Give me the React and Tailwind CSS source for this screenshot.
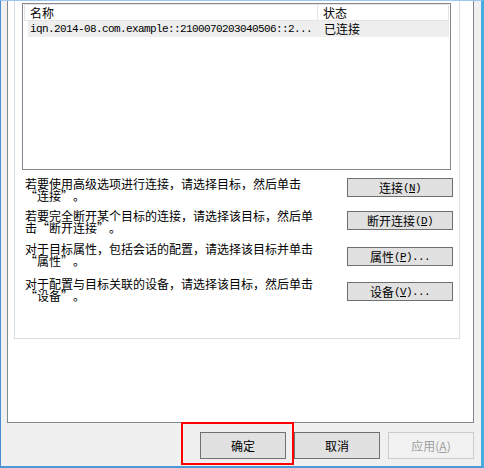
import React from 'react';

const cjk = "font-['Noto_Sans_CJK_SC',sans-serif]";
const mono = "font-['Liberation_Mono','Noto_Sans_CJK_SC',monospace] text-[11px] tracking-[-0.6px]";

const rows = [
  { text: '若要使用高级选项进行连接，请选择目标，然后单击', quoted: '连接', label: '连接', key: 'N', dots: false, h: 'h-[32px]', bt: 'mt-0' },
  { text: '若要完全断开某个目标的连接，请选择该目标，然后单击', quoted: '断开连接', label: '断开连接', key: 'D', dots: false, h: 'h-[33px]', bt: 'mt-[1px]' },
  { text: '对于目标属性，包括会话的配置，请选择该目标并单击', quoted: '属性', label: '属性', key: 'P', dots: true, h: 'h-[35px]', bt: 'mt-[4px]' },
  { text: '对于配置与目标关联的设备，请选择该目标，然后单击', quoted: '设备', label: '设备', key: 'V', dots: true, h: 'h-[24px]', bt: 'mt-[4px]' },
];

function SmallButton({ label, accel, dots, className }) {
  return (
    <div className={`w-[106px] h-[19px] flex items-center justify-center bg-[#e1e1e1] border border-[#707070] text-[12px] leading-[12px] text-black ${className}`}>
      <span className={cjk}>{label}</span>
      <span className={mono}>
        (<span className="underline underline-offset-1">{accel}</span>){dots ? '...' : ''}
      </span>
    </div>
  );
}

function DialogButton({ children, disabled }) {
  return (
    <div
      className={`w-[86px] h-[27px] flex items-center justify-center text-[12px] ${cjk} ${
        disabled
          ? 'bg-[#f2f2f2] border border-[#cccccc] text-[#a0a0a0]'
          : 'bg-[#e1e1e1] border border-[#707070] text-black'
      }`}
    >
      {children}
    </div>
  );
}

export default function App() {
  return (
    <div lang="zh-CN" className="relative w-[484px] h-[468px] bg-[#f0f0f0] border-t border-t-[#9cc7ee] border-l border-l-[#4a8fd6] border-r-[3px] border-r-[#45ace0] border-b-2 border-b-[#4a9ad8] overflow-hidden">
      {/* tab page */}
      <div className="ml-[6px] w-[467px] h-[422px] bg-white border-l border-r border-b border-[#828790]">
        {/* group box */}
        <div className="ml-[6px] w-[446px] h-[338px] border-l border-r border-b border-[#d5dfe5] pt-[2px]">
          {/* list view */}
          <div className="ml-[7px] w-[429px] h-[167px] border border-[#828790] bg-white">
            <div className={`ml-[1px] w-[425px] h-[17px] flex border border-[#e5e5e5] bg-white text-[12px] leading-[15px] ${cjk}`}>
              <div className="w-[293px] border-r border-[#e5e5e5] pl-[5px]">名称</div>
              <div className="pl-[5px]">状态</div>
            </div>
            <div className="ml-[5px] w-[421px] h-[16px] flex items-center bg-[#eeeeee]">
              <div className={`w-[296px] pl-[2px] leading-[16px] ${mono}`}>
                iqn.2014-08.com.example::2100070203040506::2...
              </div>
              <div className={`text-[12px] leading-[16px] ${cjk}`}>已连接</div>
            </div>
          </div>

          <div className="mt-[8px] pl-[10px] pr-[6px]">
            {rows.map((r) => (
              <div key={r.key} className={`flex justify-between items-start ${r.h}`}>
                <p className={`w-[290px] text-[12px] leading-[12px] text-black ${cjk}`}>
                  {r.text}
                  <span className="whitespace-nowrap">
                    <span className="inline-block w-[12px] text-right">“</span>
                    {r.quoted}
                    <span className="inline-block w-[12px] text-left">”</span>。
                  </span>
                </p>
                <SmallButton label={r.label} accel={r.key} dots={r.dots} className={r.bt} />
              </div>
            ))}
          </div>
        </div>
      </div>

      {/* dialog buttons */}
      <div className="mt-[9px] flex justify-end gap-[8px] pr-[7px]">
        <DialogButton>确定</DialogButton>
        <DialogButton>取消</DialogButton>
        <DialogButton disabled>
          应用(<span className="underline underline-offset-1">A</span>)
        </DialogButton>
      </div>

      {/* highlight annotation */}
      <div className="absolute left-[180px] top-[421px] w-[113px] h-[43px] border-2 border-[#ff0000]" />
    </div>
  );
}
